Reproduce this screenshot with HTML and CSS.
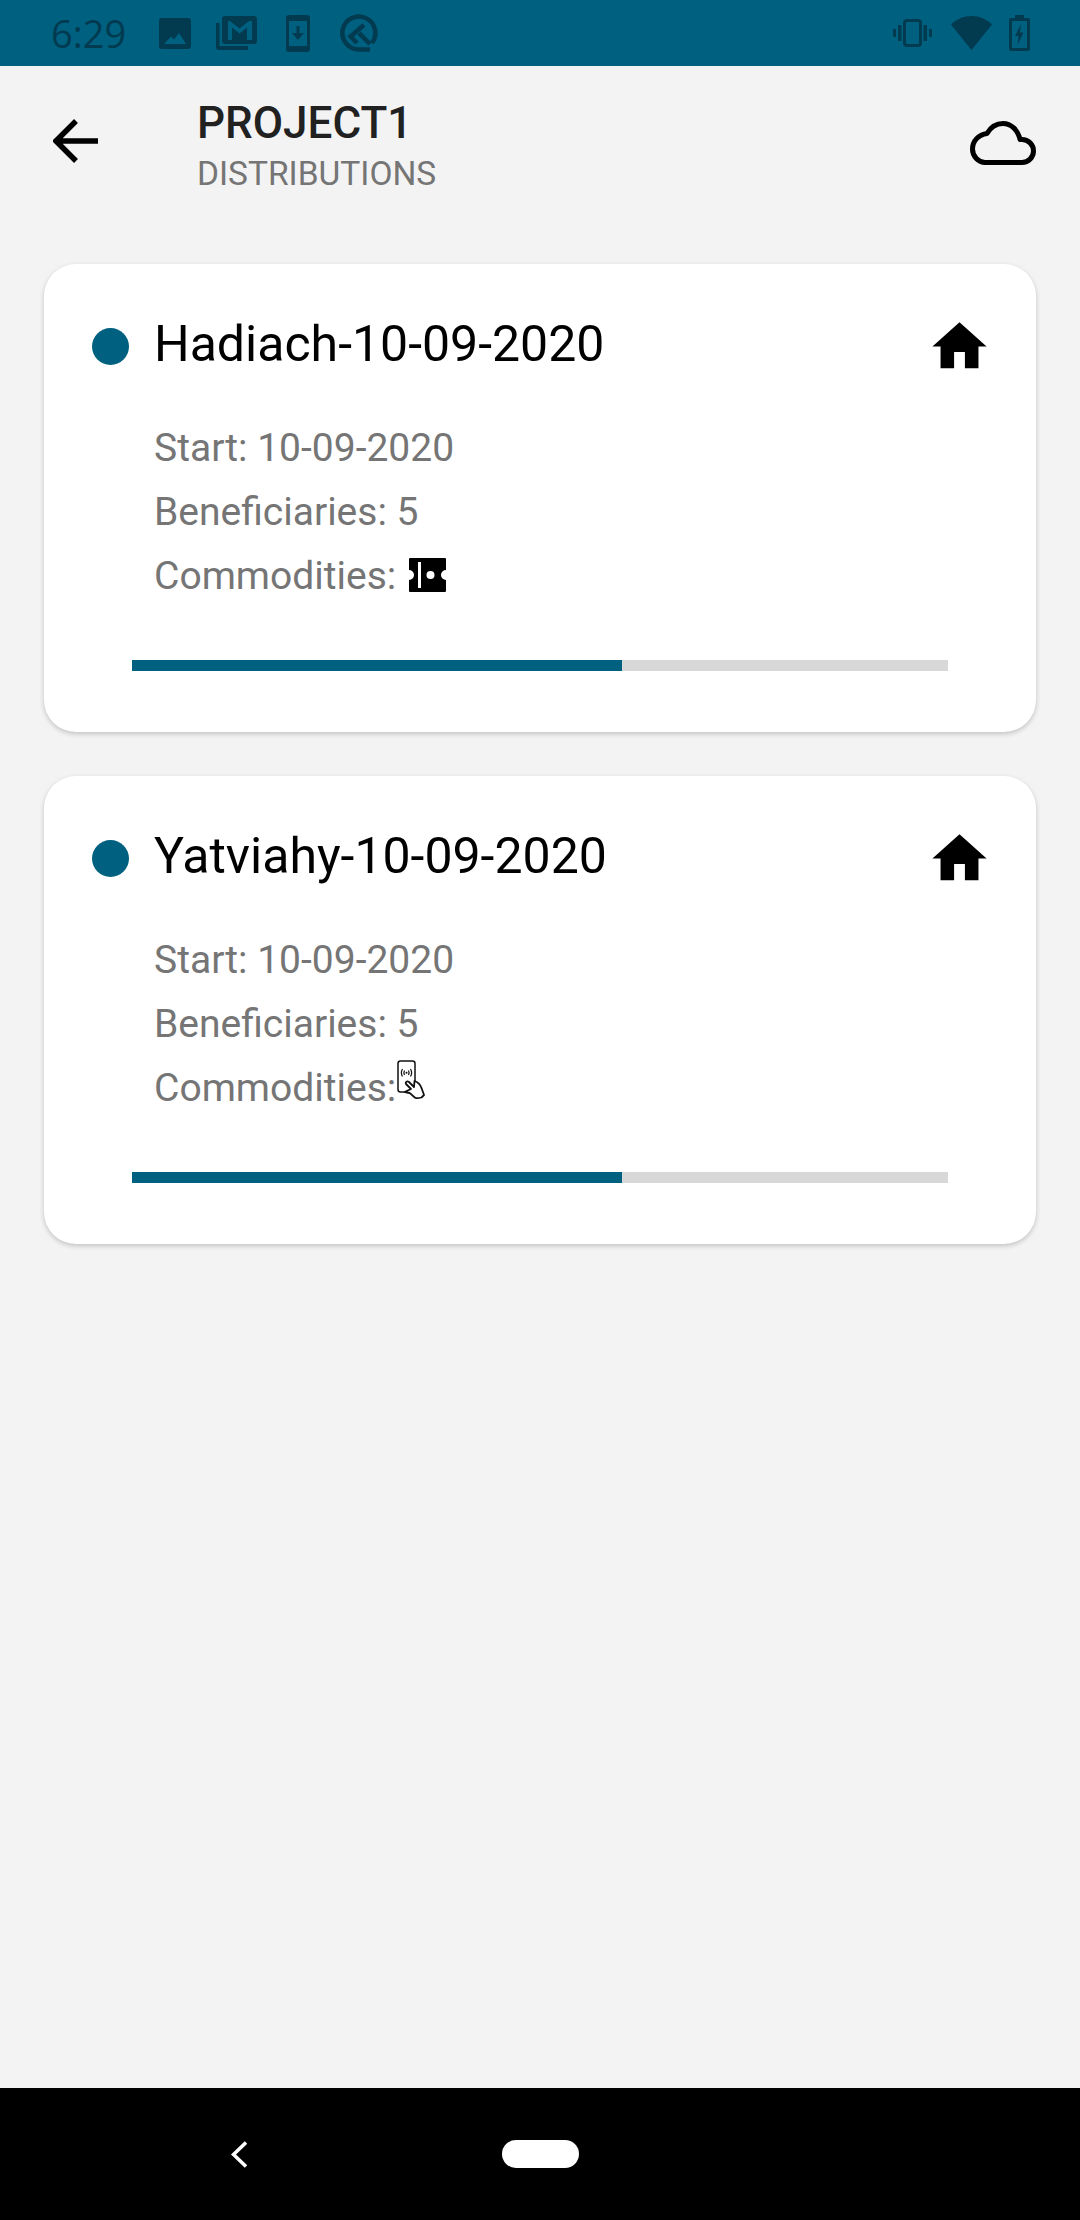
FILE: index.html
```html
<!DOCTYPE html>
<html lang="en">
<head>
<meta charset="utf-8">
<title>Distributions</title>
<link rel="stylesheet" href="styles.css">
</head>
<body>
<div class="app">
  <header class="status">
    <span class="time">6:29</span>
    <svg class="s-img" width="32" height="31" viewBox="0 0 32 31"><path fill-rule="evenodd" d="M3 0h26a3 3 0 0 1 3 3v25a3 3 0 0 1-3 3H3a3 3 0 0 1-3-3V3a3 3 0 0 1 3-3zM5 26h22l-7-11-5 6.500-3-3z"/></svg>
    <svg class="s-mail" width="41" height="34" viewBox="0 0 41 34"><path d="M0 7h3.500v23H32v4H3a3 3 0 0 1-3-3z"/><path fill-rule="evenodd" d="M9 0h29a3 3 0 0 1 3 3v22a3 3 0 0 1-3 3H9a3 3 0 0 1-3-3V3a3 3 0 0 1 3-3zM12 5v19h4V11.500l7.500 6 7.500-6V24h5V5h-3l-9.500 7.500L14 5z"/></svg>
    <svg class="s-dl" width="24" height="37" viewBox="0 0 24 37"><path fill-rule="evenodd" d="M3 0h18a3 3 0 0 1 3 3v31a3 3 0 0 1-3 3H3a3 3 0 0 1-3-3V3a3 3 0 0 1 3-3zM3 6v25h18V6zM10.500 11h3v7H18l-6 7-6-7h4.500z"/></svg>
    <svg class="s-q" width="38" height="38" viewBox="0 0 38 38"><path class="q-line" d="M32 29A16.500 16.500 0 1 0 19 35.500H30"/><path class="q-line" d="M24 11L10.500 22.500 17 29M19 19L30 30"/></svg>
    <span class="status-gap"></span>
    <svg class="s-vib" width="39" height="28" viewBox="0 0 39 28"><rect x="11.500" y="1.500" width="16" height="25" rx="2.500" fill="none" stroke-width="3"/><path d="M5 6h3.500v16H5zM0 10h3v8H0zM30.500 6H34v16h-3.500zM36 10h3v8h-3z"/></svg>
    <svg class="s-wifi" width="41" height="34" viewBox="0 0 41 34"><path d="M0 8.500C5.500 3.200 12.500 0 20.500 0S35.500 3.200 41 8.500L20.500 34z"/></svg>
    <svg class="s-bat" width="21" height="36" viewBox="0 0 21 36"><path fill-rule="evenodd" d="M6 0h9v3h4a2 2 0 0 1 2 2v29a2 2 0 0 1-2 2H2a2 2 0 0 1-2-2V5a2 2 0 0 1 2-2h4zM3 6v27h15V6zM12 9l-6 12h3.500L8.500 30l6-12.500H11z"/></svg>
  </header>

  <section class="toolbar">
    <svg class="back" width="46" height="44" viewBox="0 0 46 44"><path d="M45 22H4M23 2L3 22l20 20" fill="none" stroke="#000" stroke-width="5.500"/></svg>
    <div class="titles">
      <h1 class="project">PROJECT1</h1>
      <p class="subtitle">DISTRIBUTIONS</p>
    </div>
    <svg class="cloud" width="66" height="44" viewBox="0 0 66 44"><path d="M15 41.500H52A11.500 11.500 0 0 0 52 18.500H50C48 9 41 2.500 33 2.500c-7 0-12.500 4-16 10C8.500 13.500 2.500 20 2.500 28c0 7.500 6 13.500 12.500 13.500z" fill="none" stroke="#000" stroke-width="5" stroke-linejoin="round"/></svg>
  </section>

  <main class="list">
    <article class="card">
      <div class="card-head">
        <span class="dot"></span>
        <h2 class="name">Hadiach-10-09-2020</h2>
        <svg class="home" width="65" height="65" viewBox="0 0 24 24"><path d="M10 20v-6h4v6h5v-8h3L12 3 2 12h3v8z"/></svg>
      </div>
      <div class="details">
        <p class="line">Start: 10-09-2020</p>
        <p class="line">Beneficiaries: 5</p>
        <div class="line comm">
          <span>Commodities:</span>
          <svg class="ticket" width="37" height="34" viewBox="0 0 37 34"><path fill-rule="evenodd" d="M1 0h35a1 1 0 0 1 1 1v11a5 5 0 0 0 0 10v11a1 1 0 0 1-1 1H1a1 1 0 0 1-1-1V22a5 5 0 0 0 0-10V1a1 1 0 0 1 1-1zM9 4v26h3V4zM21.500 13a4 4 0 1 0 0 8 4 4 0 0 0 0-8z"/></svg>
        </div>
      </div>
      <div class="bar"><div class="bar-fill" style="width:60%"></div></div>
    </article>

    <article class="card">
      <div class="card-head">
        <span class="dot"></span>
        <h2 class="name">Yatviahy-10-09-2020</h2>
        <svg class="home" width="65" height="65" viewBox="0 0 24 24"><path d="M10 20v-6h4v6h5v-8h3L12 3 2 12h3v8z"/></svg>
      </div>
      <div class="details">
        <p class="line">Start: 10-09-2020</p>
        <p class="line">Beneficiaries: 5</p>
        <div class="line comm">
          <span>Commodities:</span>
          <svg class="nfc" width="28" height="42" viewBox="0 0 28 42" fill="none" stroke="#111"><rect x="1" y="1" width="17" height="31" rx="2.500" stroke-width="1.500"/><path d="M5.500 9c-1.500 2.500-1.500 5 0 7.500M7.500 10.500c-.8 1.500-.8 3 0 4.500M13.500 9c1.500 2.500 1.500 5 0 7.500M11.500 10.500c.8 1.500.8 3 0 4.500" stroke-width="1.200"/><circle cx="9.500" cy="12.800" r="1" fill="#111" stroke="none"/><path d="M8 32c1-1 4-2 6-3l-5-5c-1-2 1-3.500 3-2l5 5 .5-6c3 1 6 4 7 7 1 3 2 5 2.500 7l-2.500 2.500c-2 .5-4 1-6 .5-3-2-4-4-6-5z" fill="#fff" stroke-width="1.800" stroke-linejoin="round"/></svg>
        </div>
      </div>
      <div class="bar"><div class="bar-fill" style="width:60%"></div></div>
    </article>
  </main>

  <nav class="navbar">
    <svg class="nav-back" width="16" height="27" viewBox="0 0 16 27"><path d="M15 1.500L2.500 13.500 15 25.500" fill="none" stroke="#fff" stroke-width="3.500"/></svg>
    <span class="pill"></span>
  </nav>
</div>
</body>
</html>
```
FILE: styles.css
```css
* { box-sizing: border-box; }
html, body { margin: 0; padding: 0; }
body { font-family: Roboto, "Liberation Sans", sans-serif; background: #f3f3f3; }
h1, h2, p { margin: 0; font-weight: 400; }
svg { display: block; flex: none; }

.app { width: 1080px; height: 2220px; display: flex; flex-direction: column; background: #f3f3f3; overflow: hidden; }

.status { height: 66px; flex: none; background: #006080; display: flex; align-items: center; padding-left: 51px; fill: #023a50; stroke: none; }
.status .s-vib rect { stroke: #023a50; }
.q-line { fill: none; stroke: #023a50; stroke-width: 4.5px; }
.time { font-family: "Open Sans", Roboto, sans-serif; font-size: 38px; font-weight: 500; color: #023a50; width: 72px; line-height: 40px; white-space: nowrap; }
.s-img { margin-left: 36px; }
.s-mail { margin-left: 25px; }
.s-dl { margin-left: 29px; }
.s-q { margin-left: 30px; }
.status-gap { flex: 1; }
.s-wifi { margin-left: 19px; }
.s-bat { margin-left: 17px; margin-right: 50px; }

.toolbar { height: 198px; flex: none; display: flex; align-items: flex-start; padding: 32px 44px 0 53px; }
.back { margin-top: 21px; }
.titles { margin-left: 98px; }
.project { font-size: 44px; font-weight: 500; line-height: 50px; color: #212121; }
.subtitle { font-size: 33.5px; line-height: 50px; margin-top: 1px; color: #757575; }
.cloud { margin-left: auto; margin-top: 23px; }

.list { flex: 1; display: flex; flex-direction: column; gap: 44px; padding: 0 44px; }
.card { background: #fff; border-radius: 32px; box-shadow: 0 2px 5px rgba(0,0,0,.2); padding: 50px 44px 61px 48px; }
.card-head { display: flex; align-items: center; }
.dot { width: 37px; height: 37px; border-radius: 50%; background: #006080; }
.name { font-size: 50px; line-height: 56px; color: #000; margin-left: 25px; margin-bottom: 5px; }
.home { margin-left: auto; }

.details { margin-top: 37px; margin-left: 62px; }
.line { font-size: 39px; line-height: 64px; color: #757575; }
.comm { display: flex; align-items: center; }
.ticket { margin-left: 13px; margin-bottom: 2px; }
.nfc { margin-left: 1px; margin-bottom: 14px; }

.bar { height: 11px; margin: 52px 44px 0 40px; background: #d8d8d8; }
.bar-fill { height: 100%; background: #006080; }

.navbar { height: 132px; flex: none; background: #000; display: flex; align-items: center; padding-left: 231px; }
.pill { width: 77px; height: 28px; border-radius: 14px; background: #fff; margin-left: 255px; }
```
